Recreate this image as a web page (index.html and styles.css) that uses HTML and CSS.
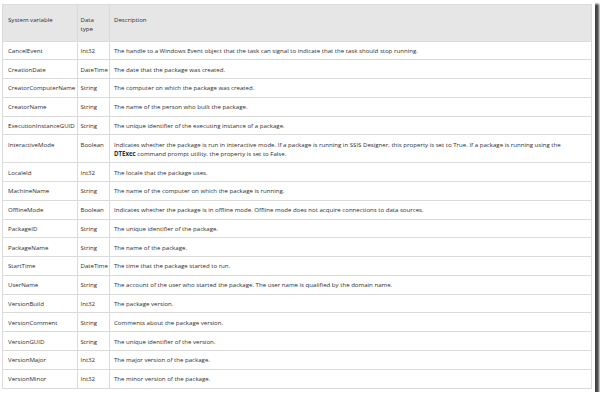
FILE: index.html
```html
<!DOCTYPE html>
<html lang="en">

<head>
  <meta charset="UTF-8">
  <meta name="viewport" content="width=device-width, initial-scale=1.0">
  <title>SSIS System Variables</title>
  <link rel="stylesheet" href="styles.css">
</head>

<body>
  <main class="shot">
    <table class="vars">
      <thead>
        <tr>
          <th class="col-name">System variable</th>
          <th class="col-type">Data type</th>
          <th>Description</th>
        </tr>
      </thead>
      <tbody>
        <tr>
          <td>CancelEvent</td>
          <td>Int32</td>
          <td>The handle to a Windows Event object that the task can signal to indicate that the task should stop running.</td>
        </tr>
        <tr>
          <td>CreationDate</td>
          <td>DateTime</td>
          <td>The date that the package was created.</td>
        </tr>
        <tr>
          <td>CreatorComputerName</td>
          <td>String</td>
          <td>The computer on which the package was created.</td>
        </tr>
        <tr>
          <td>CreatorName</td>
          <td>String</td>
          <td>The name of the person who built the package.</td>
        </tr>
        <tr>
          <td>ExecutionInstanceGUID</td>
          <td>String</td>
          <td>The unique identifier of the executing instance of a package.</td>
        </tr>
        <tr>
          <td>InteractiveMode</td>
          <td>Boolean</td>
          <td class="wrap-early">Indicates whether the package is run in interactive mode. If a package is running in SSIS Designer, this property is set to True. If a package is running using the <strong>DTExec</strong> command prompt utility, the property is set to False.</td>
        </tr>
        <tr>
          <td>LocaleId</td>
          <td>Int32</td>
          <td>The locale that the package uses.</td>
        </tr>
        <tr>
          <td>MachineName</td>
          <td>String</td>
          <td>The name of the computer on which the package is running.</td>
        </tr>
        <tr>
          <td>OfflineMode</td>
          <td>Boolean</td>
          <td>Indicates whether the package is in offline mode. Offline mode does not acquire connections to data sources.</td>
        </tr>
        <tr>
          <td>PackageID</td>
          <td>String</td>
          <td>The unique identifier of the package.</td>
        </tr>
        <tr>
          <td>PackageName</td>
          <td>String</td>
          <td>The name of the package.</td>
        </tr>
        <tr>
          <td>StartTime</td>
          <td>DateTime</td>
          <td>The time that the package started to run.</td>
        </tr>
        <tr>
          <td>UserName</td>
          <td>String</td>
          <td>The account of the user who started the package. The user name is qualified by the domain name.</td>
        </tr>
        <tr>
          <td>VersionBuild</td>
          <td>Int32</td>
          <td>The package version.</td>
        </tr>
        <tr>
          <td>VersionComment</td>
          <td>String</td>
          <td>Comments about the package version.</td>
        </tr>
        <tr>
          <td>VersionGUID</td>
          <td>String</td>
          <td>The unique identifier of the version.</td>
        </tr>
        <tr>
          <td>VersionMajor</td>
          <td>Int32</td>
          <td>The major version of the package.</td>
        </tr>
        <tr>
          <td>VersionMinor</td>
          <td>Int32</td>
          <td>The minor version of the package.</td>
        </tr>
      </tbody>
    </table>
  </main>
</body>

</html>
```

FILE: styles.css
```css
*,
*::before,
*::after {
  box-sizing: border-box;
  margin: 0;
  padding: 0;
}

:root {
  --text: hsl(0, 0%, 18%);
  --header-bg: hsl(0, 0%, 90%);
  --line: hsl(0, 0%, 86%);
  --shadow: hsl(0, 0%, 27%);

  --ff-ui: 'Open Sans', 'Noto Sans', sans-serif;
}

body {
  background-color: #fff;
}

.shot {
  width: 595px;
  padding: 4px 3px 3px 2px;

  background-color: #fff;
  box-shadow: 4px 4px 2px var(--shadow);
}

.vars {
  width: 100%;
  border-collapse: collapse;
  table-layout: fixed;

  color: var(--text);
  font-family: var(--ff-ui);
  font-size: 6.1px;
  line-height: 9px;
}

.vars th,
.vars td {
  padding: 4.4px 4px;
  border: 1px solid var(--line);

  text-align: left;
  vertical-align: top;
  font-weight: 400;
}

.vars th:first-child,
.vars td:first-child {
  padding-left: 5px;
}

.vars td:nth-child(2) {
  padding-inline: 2.5px 0;
  white-space: nowrap;
}

.vars th {
  padding-block: 9.5px 8px;
  background-color: var(--header-bg);
}

/* narrow enough that the header wraps to "Data / type" */
.vars th:nth-child(2) {
  padding-inline: 2.5px 8px;
}

.col-name {
  width: 75px;
}

.col-type {
  width: 32px;
}

/* keep "DTExec" on the second line like the source */
.vars .wrap-early {
  padding-right: 22px;
}

.vars strong {
  font-weight: 700;
}
```
